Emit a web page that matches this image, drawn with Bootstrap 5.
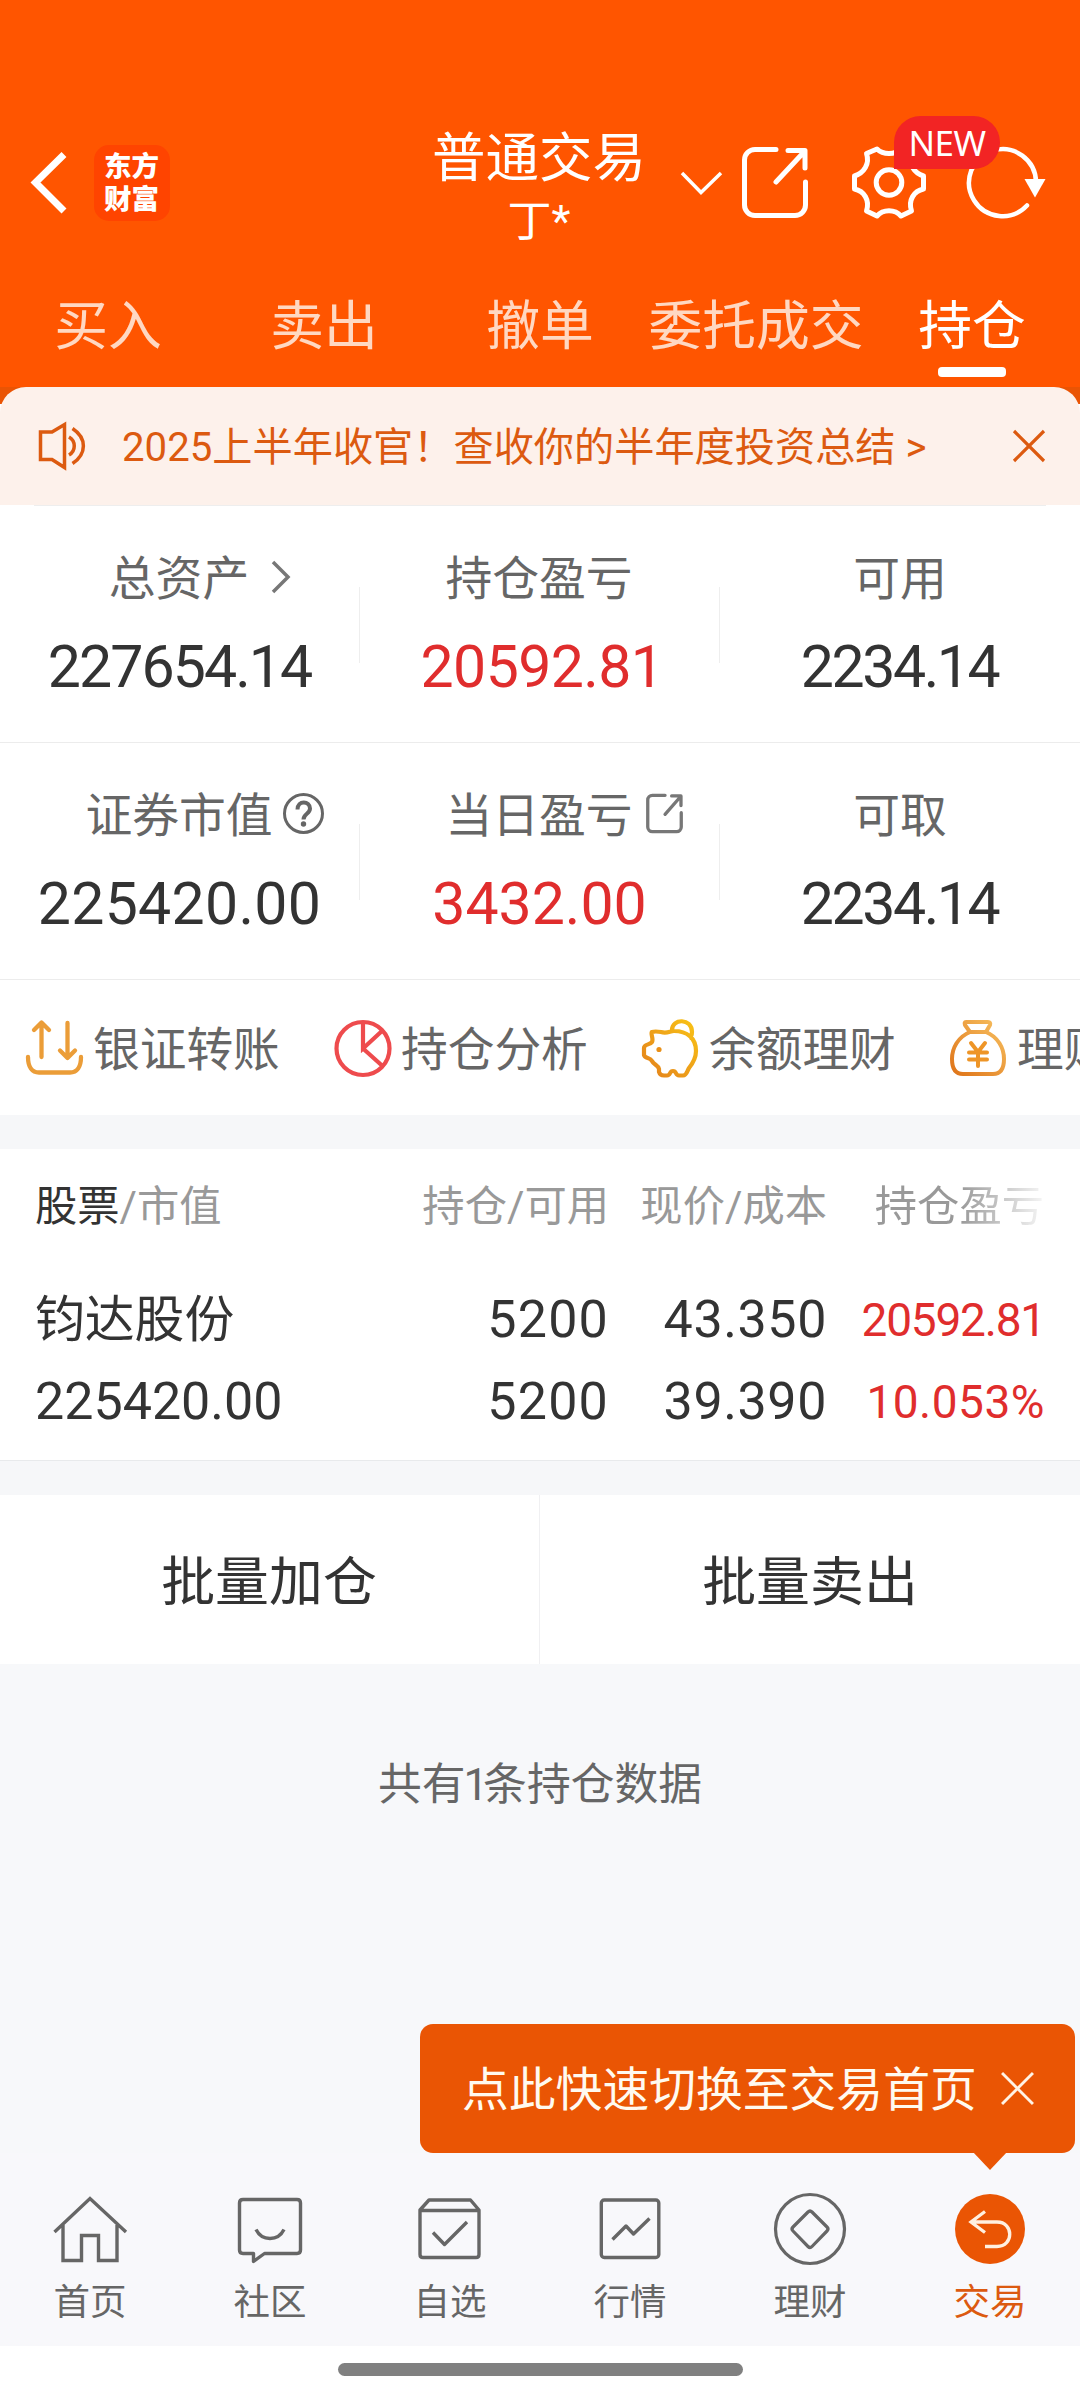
<!DOCTYPE html>
<html lang="zh-CN">
<head>
<meta charset="utf-8">
<meta name="viewport" content="width=device-width, initial-scale=1">
<title>持仓</title>
<link href="https://cdn.jsdelivr.net/npm/bootstrap@5.3.0/dist/css/bootstrap.min.css" rel="stylesheet">
<style>
body{font-family:Roboto,"Noto Sans CJK SC",sans-serif;color:#333;background:#f7f8fa;line-height:1;overflow-x:hidden}
svg{display:block;flex:none;fill:none;overflow:visible}
.screen{width:1080px;height:2400px;overflow:hidden}
.screen>*{flex-shrink:0}
.topbar{background:#f50;height:387px;padding-top:110px}
.bar-row{height:146px}
.bar-left{width:431px;padding-left:30px;gap:28px}
.app-logo{width:76px;height:76px;border-radius:15px;background:#f40;color:#fff;font:900 27.500px/33px "Noto Sans CJK SC",sans-serif;padding:3px 0 0 10px}
.acct{width:216px;color:#fff;margin-top:1px}
.acct-name{font-size:53.5px;line-height:64px;white-space:nowrap}
.acct-user{font-size:44px;line-height:50px;padding-top:6px;margin-bottom:-6px}
.new-tag{position:absolute;left:42px;top:-31px;width:106px;height:53px;border-radius:27px 27px 27px 0;background:#f22424;color:#fff;font:35px/54px "Noto Sans","Noto Sans CJK SC",sans-serif;text-align:center;z-index:2;letter-spacing:-.5px}
.tabs-row{height:131px;font-size:53.8px;color:#ffd8c2}
.tabs-row>div{flex:0 0 216px;text-align:center;line-height:64px;padding-top:39px;white-space:nowrap}
.tabs-row .on{color:#fff}
.on i{display:block;width:68px;height:10px;border-radius:4px;background:#fff;margin:8px auto 0}
.corner-bg{background:linear-gradient(#ea5404 17px,#fff 17px)}
.notice{height:118px;background:#fdf1eb;border-radius:26px 26px 0 0;color:#dc5a10;font-size:40.2px;padding:0 35px 0 38px}
.notice-line{height:1px;background:#eee;margin:0 34px}
.stats{height:237px;border-bottom:1px solid #ececec}
.cell{flex:0 0 360px;position:relative;padding-top:43px}
.cell+.cell::before{content:"";position:absolute;left:-1px;top:81px;width:1px;height:76px;background:#eee}
.lab{font-size:46.8px;line-height:60px;color:#666;height:60px;margin-left:-2px}
.num{font-size:59px;line-height:60px;margin-top:28px;margin-left:-1px;white-space:nowrap}
.up{color:#e02d2d}
.quick{height:135px;padding-left:26px;overflow:hidden;color:#666;font-size:46.7px}
.quick>div{flex:0 0 308px;gap:10px;white-space:nowrap;height:136px}
.quick span{padding-top:5px;margin-left:-1px}
.gapbar{height:34px;background:#f6f7f9}
.holdings{height:312px;border-bottom:1px solid #e8eaec;padding:0 36px 0 35px;overflow:hidden}
.hrow{display:grid;grid-template-columns:353px 221px 218px 217px;white-space:nowrap;text-align:right}
.hrow>:first-child{text-align:left}
.hrow.head{font-size:42.3px;line-height:60px;color:#999;padding-top:28px;height:130px}
.hrow.line1,.hrow.line2{font-size:52px;line-height:60px;height:82px;padding-top:11px}
.fade-txt{background:linear-gradient(90deg,#999 50%,#f6f6f6 100%);-webkit-background-clip:text;background-clip:text;color:transparent}
.hrow .up{font-size:46px;margin-right:-1px}
.batch{height:169px;font-size:53.9px;padding-top:7px;position:relative}
.batch>div{flex:0 0 540px;margin-left:-1px}
.batch>div+div{margin-left:1px}
.batch::before{content:"";position:absolute;left:539px;top:0;bottom:0;width:1px;background:#f0f0f2}
.total{font-size:43.8px;color:#666;padding-top:91px;height:360px;line-height:60px}
.tipbox{width:655px;height:129px;background:#ea5504;border-radius:13px;color:#fffaf0;font-size:46.8px;padding:0 41px 0 42px;margin-left:420px;position:relative}
.tipbox span{padding-top:4px}
.tipbox::after{content:"";position:absolute;left:553px;top:128px;border:17px solid transparent;border-top:18px solid #ea5504;border-bottom:0}
.dock{height:193px;background:#f8f8fb;padding-top:38px;font-size:36.5px;color:#666}
.dock>div{flex:0 0 180px;line-height:44px}
.dock svg{height:76px;width:76px;margin-bottom:14px}
.homebar{height:54px;background:#fff;padding-top:17px}
.homebar div{width:405px;height:13px;border-radius:7px;background:#808080;margin:0 auto}
</style>
</head>
<body>
<div class="screen d-flex flex-column">
  <header class="topbar">
    <div class="bar-row d-flex align-items-center">
      <div class="bar-left d-flex align-items-center">
        <svg width="36" height="64" viewBox="30 151 36 64" stroke="#fff" stroke-width="7"><path d="M64 154.500L35.500 182.500L64 211"/></svg>
        <div class="app-logo"><div>东方</div><div>财富</div></div>
      </div>
      <div class="acct text-center">
        <div class="acct-name">普通交易</div>
        <div class="acct-user">丁*</div>
      </div>
      <svg style="margin-left:34px" width="40" height="24" viewBox="681 170 40 24" stroke="#fff" stroke-width="3.500"><path d="M682 172L701 191.500L721 172"/></svg>
      <svg style="margin-left:21px" width="66" height="72" viewBox="742 147 66 72" stroke="#fff" stroke-width="5" stroke-linecap="round" stroke-linejoin="round"><path d="M776 149.500H755a10.500 10.500 0 0 0-10.500 10.500v45a10.500 10.500 0 0 0 10.500 10.500h40a10.500 10.500 0 0 0 10.500-10.500v-23M788 150.500H805V168M804 152L776 182"/></svg>
      <div class="position-relative" style="margin-left:44px">
        <svg width="74" height="72" viewBox="852 147 74 72" stroke="#fff" stroke-width="5" stroke-linejoin="round"><path d="M854.500 176L854.500 189C864 191 870 200 866.500 211L877 216C883 209 895 209 901 216L911.500 211C908 200 914 191 923.500 189L923.500 176C914 173 908 164 911.500 153.500L901 149C895 155 883 155 877 149L866.500 153.500C870 164 864 173 854.500 176Z"/><circle cx="889" cy="182.500" r="12.800"/></svg>
        <span class="new-tag">NEW</span>
      </div>
      <svg style="margin-left:40px" width="80" height="72" viewBox="966 147 80 72" stroke="#fff" stroke-width="4.500" stroke-linecap="round"><path d="M1036 182A33.500 33.500 0 1 0 1027 205.500"/><path d="M1024.500 179h21l-10.500 18.500z" fill="#fff" stroke="none"/></svg>
    </div>
    <nav class="tabs-row d-flex">
      <div>买入</div><div>卖出</div><div>撤单</div><div>委托成交</div><div class="on">持仓<i></i></div>
    </nav>
  </header>

  <section class="bg-white">
    <div class="corner-bg">
      <div class="notice d-flex align-items-center">
        <svg width="48" height="50" viewBox="38 421 48 50" stroke="currentColor" stroke-width="3.500"><path d="M40.500 432H52L64.500 424.500V467.500L52 459.500H40.500ZM69 437C76 441 76 451 69 455M72.500 428.500C87 438 87 454 72.500 463.500"/></svg>
        <span style="margin-left:36px;padding-top:5px">2025上半年收官！查收你的半年度投资总结 <span>&gt;</span></span>
        <svg class="ms-auto" width="32" height="32" viewBox="0 0 32 32" stroke="currentColor" stroke-width="3.200"><path d="M1 1L31 31M31 1L1 31"/></svg>
      </div>
    </div>
    <div class="notice-line"></div>

    <div class="stats d-flex text-center">
      <div class="cell">
        <div class="lab d-flex justify-content-center align-items-center">总资产<svg style="margin:-4px -41px 0 23px" width="18" height="32" viewBox="0 0 18 32" stroke="#777" stroke-width="3.500"><path d="M1 1L16 16L1 31"/></svg></div>
        <div class="num" style="letter-spacing:-1.900px">227654.14</div>
      </div>
      <div class="cell"><div class="lab">持仓盈亏</div><div class="num up" style="letter-spacing:-.6px;margin-left:4px">20592.81</div></div>
      <div class="cell"><div class="lab" style="margin-left:0">可用</div><div class="num" style="letter-spacing:-2.400px">2234.14</div></div>
    </div>
    <div class="stats d-flex text-center">
      <div class="cell">
        <div class="lab d-flex justify-content-center align-items-center">证券市值<svg style="margin:-5px -51px 0 10px" width="41" height="41" viewBox="0 0 41 41" stroke="#666"><circle cx="20.500" cy="20.500" r="19" stroke-width="3"/><path d="M14.500 16.500C14.500 7 27 7.500 27 15.500C27 21 20.500 20.500 20.500 26.500" stroke-width="4"/><circle cx="20.500" cy="31" r="2.700" fill="#666" stroke="none"/></svg></div>
        <div class="num" style="letter-spacing:.3px">225420.00</div>
      </div>
      <div class="cell">
        <div class="lab d-flex justify-content-center align-items-center">当日盈亏<svg style="margin:-6px -51px 0 12px" width="39" height="39" viewBox="742 147 66 71" stroke="#777" stroke-width="6" stroke-linecap="round" stroke-linejoin="round"><path d="M776 149.500H753a8.500 8.500 0 0 0-8.500 8.500v49a8.500 8.500 0 0 0 8.500 8.500h44a8.500 8.500 0 0 0 8.500-8.500v-26M788 150.500H805V168M804 152L776 184"/></svg></div>
        <div class="num up">3432.00</div>
      </div>
      <div class="cell"><div class="lab" style="margin-left:0">可取</div><div class="num" style="letter-spacing:-2.400px">2234.14</div></div>
    </div>

    <div class="quick d-flex">
      <div class="d-flex align-items-center">
        <svg width="58" height="58" viewBox="26 1018 58 58" stroke="#eb9d38" stroke-width="4.300" stroke-linecap="round" stroke-linejoin="round"><path d="M41.500 1056V1022M34 1029L41.500 1021.500L49 1029M67.500 1022V1056M60 1049.500L67.500 1057L75 1049.500M28 1056C28 1066 32 1071.500 39 1071.500H70C77 1071.500 81 1066 81 1056"/></svg>
        <span>银证转账</span>
      </div>
      <div class="d-flex align-items-center">
        <svg width="58" height="58" viewBox="333.500 1018 58 58" stroke="#ee4b4d" stroke-width="4.200"><circle cx="362.500" cy="1047.500" r="26.500"/><path d="M362.500 1021V1047.500L382 1029.500M362.500 1047.500L382 1065"/></svg>
        <span>持仓分析</span>
      </div>
      <div class="d-flex align-items-center">
        <svg width="58" height="58" viewBox="642 1018 58 58" stroke="url(#pg)" stroke-width="4.200" stroke-linejoin="round"><defs><linearGradient id="pg" x1="1" y1="0" x2="0" y2="1"><stop offset="0" stop-color="#f9c316"/><stop offset="1" stop-color="#e3801c"/></linearGradient></defs><path d="M652 1031C650 1032 654 1038 652 1041C650 1044 644 1043 644 1047V1054C645 1058 650 1056 652 1060C654 1064 658 1064 659 1068V1071Q660 1074.500 664 1074.500H667C671 1074.500 669 1070 673 1070C677 1070 675 1074.500 679 1074.500H683C687 1074.500 687 1070 689 1067C693 1062 696 1057 696 1050C696 1037 687 1030 674 1030C670 1030 667 1033 661 1031Q655 1030 652 1031ZM672 1029C672 1017 692 1017 692 1031C692 1034 691 1036 689 1037"/><circle cx="659" cy="1048.500" r="2.600" fill="#e99018" stroke="none"/></svg>
        <span>余额理财</span>
      </div>
      <div class="d-flex align-items-center">
        <svg width="58" height="58" viewBox="950 1018 58 58" stroke="url(#bg)" stroke-width="4" stroke-linejoin="round" stroke-linecap="round"><defs><linearGradient id="bg" x1="1" y1="0" x2="0" y2="1"><stop offset="0" stop-color="#f7c060"/><stop offset="1" stop-color="#df7418"/></linearGradient></defs><path d="M966 1021H988Q991 1021 990 1024L986 1031H970L965 1024Q964 1021 966 1021ZM970 1031C958 1036 952 1047 952 1058C952 1067 955 1073 963 1073H993C1001 1073 1004 1067 1004 1058C1004 1047 998 1036 986 1031"/><path stroke="#ee9527" d="M971 1042L978 1051L985 1042M978 1051V1065M969 1051.500H987M969 1058.500H987"/></svg>
        <span>理财</span>
      </div>
    </div>
  </section>

  <div class="gapbar"></div>
  <section class="holdings bg-white">
    <div class="hrow head"><div><span style="color:#333">股票</span>/市值</div><div>持仓/可用</div><div>现价/成本</div><div><span class="fade-txt">持仓盈亏</span></div></div>
    <div class="hrow line1"><div style="font-size:49.800px">钧达股份</div><div style="letter-spacing:1.200px">5200</div><div style="letter-spacing:.6px">43.350</div><div class="up" style="letter-spacing:-1.200px">20592.81</div></div>
    <div class="hrow line2"><div>225420.00</div><div style="letter-spacing:1.200px">5200</div><div style="letter-spacing:.6px">39.390</div><div class="up" style="letter-spacing:.5px">10.053%</div></div>
  </section>
  <div class="gapbar"></div>
  <div class="batch bg-white d-flex">
    <div class="d-flex align-items-center justify-content-center">批量加仓</div>
    <div class="d-flex align-items-center justify-content-center">批量卖出</div>
  </div>
  <div class="total text-center">共有<span style="letter-spacing:-5px;margin-left:-2px">1</span>条持仓数据</div>

  <div class="tipbox d-flex align-items-center justify-content-between">
    <span>点此快速切换至交易首页</span>
    <svg width="33" height="33" viewBox="0 0 32 32" stroke="#fff3e6" stroke-width="2.800"><path d="M1 1L31 31M31 1L1 31"/></svg>
  </div>

  <nav class="dock d-flex text-center">
    <div class="d-flex flex-column align-items-center">
      <svg viewBox="52 2191 76 76" stroke="#666" stroke-width="3.400"><path d="M54.500 2232L90 2198.500L126 2232M63 2225V2260.500H81.500V2235.500H98.500V2260.500H117V2225"/></svg>首页</div>
    <div class="d-flex flex-column align-items-center">
      <svg viewBox="232 2191 76 76" stroke="#666" stroke-width="3.400" stroke-linejoin="round"><path d="M243 2199.500H297Q300.500 2199.500 300.500 2203V2250Q300.500 2253.500 297 2253.500H264.500L253.500 2261.500V2253.500H243Q239.500 2253.500 239.500 2250V2203Q239.500 2199.500 243 2199.500Z"/><path d="M256 2229.500C262 2241.500 278 2241.500 284 2229.500"/></svg>社区</div>
    <div class="d-flex flex-column align-items-center">
      <svg viewBox="412 2191 76 76" stroke="#666" stroke-width="3.400" stroke-linejoin="round"><path d="M420 2210L429 2200H470.500L479 2210V2254.500Q479 2257.500 476 2257.500H423Q420 2257.500 420 2254.500ZM420 2210.500H479M433 2232.500L444.500 2244.500L467 2222"/></svg>自选</div>
    <div class="d-flex flex-column align-items-center">
      <svg viewBox="592 2191 76 76" stroke="#666" stroke-width="3.400" stroke-linejoin="round"><rect x="601.300" y="2200" width="57.500" height="57.500" rx="3"/><path d="M612.500 2239.500L626 2226L633.500 2234L649.500 2218.500"/></svg>行情</div>
    <div class="d-flex flex-column align-items-center">
      <svg viewBox="772 2191 76 76" stroke="#666" stroke-width="3.200" stroke-linejoin="round"><circle cx="810" cy="2229" r="34.500"/><path d="M808 2212Q810 2210 812 2212L827 2227Q829 2229 827 2231L812 2246.500Q810 2248.500 808 2246.500L793 2231Q791 2229 793 2227Z"/></svg>理财</div>
    <div class="d-flex flex-column align-items-center" style="color:#dc5a10">
      <svg viewBox="952 2191 76 76" stroke="#fff0e0" stroke-width="3.300"><circle cx="990" cy="2229" r="35" fill="#ea5504" stroke="none"/><path d="M985 2211.500L971 2222L985 2232.500M971 2222H997C1014 2222 1014 2246.500 997 2246.500H985"/></svg>交易</div>
  </nav>
  <div class="homebar"><div></div></div>
</div>
<script src="https://cdn.jsdelivr.net/npm/bootstrap@5.3.0/dist/js/bootstrap.bundle.min.js"></script>
</body>
</html>
